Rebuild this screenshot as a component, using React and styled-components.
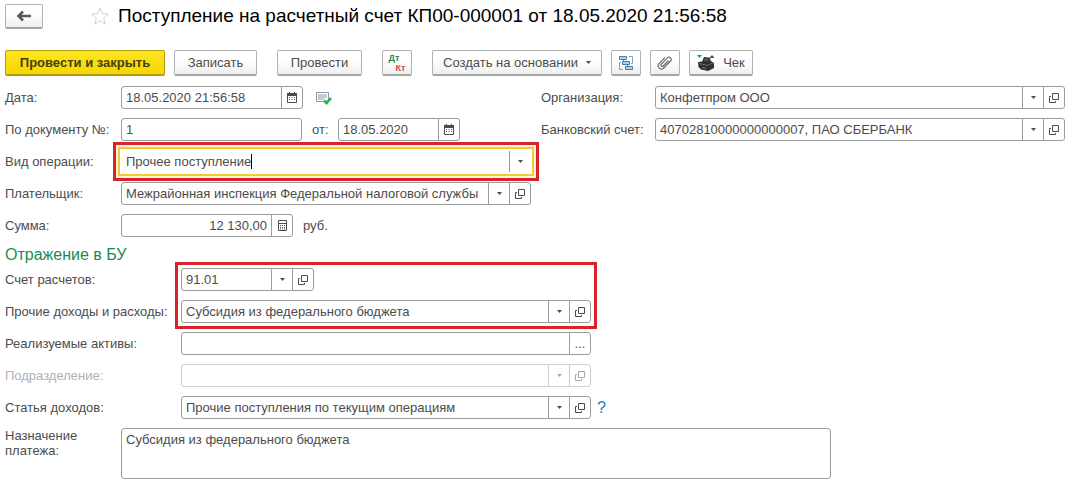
import { useId, useState } from "react";
import styled, { createGlobalStyle, css } from "styled-components";

const GlobalStyle = createGlobalStyle`
    body {
        margin: 0;
        background: #fff;
        color: #4c4c4c;
        font-family: "Liberation Sans", Arial, sans-serif;
        font-size: 13px;
    }

    * {
        box-sizing: border-box;
    }
`;

function ArrowIcon() {
    return (
        <svg width="16" height="12" viewBox="0 0 16 12" aria-hidden="true">
            <path d="M7 1.500 2.500 6 7 10.500M3 6h12" fill="none" stroke="#5a5a5a" strokeWidth="2.600" />
        </svg>
    );
}

function StarIcon() {
    return (
        <svg width="18" height="18" viewBox="0 0 18 18" aria-hidden="true">
            <path
                d="M9 1l2.300 5.700 6 .4-4.700 3.900 1.600 6L9 13.700 3.800 17l1.600-6L.7 7.100l6-.4z"
                fill="#fff"
                stroke="#d2d2d2"
            />
        </svg>
    );
}

function StructureIcon() {
    return (
        <svg width="16" height="16" viewBox="0 0 16 16" aria-hidden="true">
            <path d="M3 7.500H1.500v7H5M11 1.500h3.500v7H13" fill="none" stroke="#7fa3bd" />
            <path d="M5.500 5v2M9.500 9v3" stroke="#4681ac" />
            <path d="M1.500 1.500h7v3h-7zM4.500 6.500h7v3h-7zM7.500 11.500h7v3h-7z" fill="#a9d3f1" stroke="#4681ac" />
        </svg>
    );
}

function ClipIcon() {
    return (
        <svg width="16" height="16" viewBox="0 0 16 16" aria-hidden="true">
            <path
                d="M11.500 5.500 6.200 11a1.300 1.300 0 0 1-1.900-1.800l6-6.300a2.200 2.200 0 0 1 3.200 3.100l-6.700 7a3.200 3.200 0 0 1-4.700-4.400l5.600-5.900"
                fill="none"
                stroke="#6b6b6b"
                strokeWidth="1.200"
            />
        </svg>
    );
}

function CashRegisterIcon() {
    return (
        <svg width="18" height="18" viewBox="0 0 18 18" aria-hidden="true">
            <path d="M0 1h5L2.500 4z" fill="#1d9a63" />
            <path d="M12.500 4h5L15 1z" fill="#2b4a9c" />
            <path d="M1 8l4-.5L7 3l6 .8.500 3L17 9v5l-6 3-7-1.500L1.500 13z" fill="#303030" />
            <path d="M7.500 4.500l4.500.4-.6 2-4.600-.3z" fill="#5c5c5c" />
            <path d="M2 9.500l8 1.800 6-2.300" fill="none" stroke="#777" strokeWidth=".8" />
            <path d="M5 13.500l4 .9" stroke="#8c8c8c" strokeWidth=".8" />
        </svg>
    );
}

function CalendarIcon() {
    return (
        <svg width="10" height="11" viewBox="0 0 10 11" aria-hidden="true">
            <path d="M.5 2.500h9v8h-9z" fill="#fff" stroke="#4c4c4c" />
            <path d="M0 1h10v3H0zM2 0h1v2H2zM7 0h1v2H7z" fill="#4c4c4c" />
            <path d="M2 5.500h1M4.500 5.500h1M7 5.500h1M2 7.500h1M4.500 7.500h1M7 7.500h1" stroke="#4c4c4c" />
        </svg>
    );
}

function CalculatorIcon() {
    return (
        <svg width="9" height="11" viewBox="0 0 9 11" aria-hidden="true">
            <path d="M.5.5h8v10h-8zM1 3.500h7" fill="none" stroke="#4c4c4c" />
            <path d="M2 5.500h1M4 5.500h1M6 5.500h1M2 7.500h1M4 7.500h1M6 7.500h1M2 9h1M4 9h1M6 9h1" stroke="#4c4c4c" />
        </svg>
    );
}

function OpenIcon() {
    return (
        <svg width="10" height="10" viewBox="0 0 10 10" aria-hidden="true">
            <path d="M3.500.5h6v6h-6zM2 3.500H.5v6h6V8" fill="none" stroke="currentColor" />
        </svg>
    );
}

function CaretDownIcon() {
    return (
        <svg width="5" height="3" viewBox="0 0 5 3" aria-hidden="true">
            <path d="M0 0h5L2.500 3z" fill="currentColor" />
        </svg>
    );
}

function PostedIcon() {
    return (
        <svg width="16" height="14" viewBox="0 0 16 14" aria-hidden="true">
            <path d="M.5 1.500h12v9H.5z" fill="#fff" stroke="#8a9aa8" />
            <path d="M2 4h9M2 6h9M2 8h6" stroke="#8a9aa8" />
            <path d="M8 9.500l2.500 2.500L15 7" fill="none" stroke="#2fae43" strokeWidth="2.600" />
        </svg>
    );
}

const ACTIONS = {
    list: { title: "Выбрать из списка", icon: <CaretDownIcon /> },
    open: { title: "Открыть", icon: <OpenIcon /> },
    date: { title: "Календарь", icon: <CalendarIcon /> },
    calc: { title: "Калькулятор", icon: <CalculatorIcon /> },
    more: { title: "Выбрать", icon: "..." },
};

function Field({ id, value, width, grow, align, muted, active, actions = [] }) {
    const [text, setText] = useState(value);

    return (
        <FieldBox $width={width} $grow={grow} $muted={muted} $active={active}>
            <FieldInput
                id={id}
                value={text}
                onChange={(e) => setText(e.target.value)}
                disabled={muted}
                $align={align}
                $fit={active}
            />
            {active && <TextCursor />}
            {actions.map((action) => (
                <FieldButton key={action} type="button" aria-label={ACTIONS[action].title} disabled={muted}>
                    {ACTIONS[action].icon}
                </FieldButton>
            ))}
        </FieldBox>
    );
}

function LabeledField({ label, labelSize, children, ...field }) {
    const id = useId();

    return (
        <Row>
            <Label htmlFor={id} $size={labelSize} $muted={field.muted}>{label}</Label>
            <Field id={id} {...field} />
            {children}
        </Row>
    );
}

function App() {
    return (
        <Page>
            <GlobalStyle />
            <Header>
                <BackButton type="button" aria-label="Назад"><ArrowIcon /></BackButton>
                <StarButton type="button" aria-label="Избранное"><StarIcon /></StarButton>
                <Title>Поступление на расчетный счет КП00-000001 от 18.05.2020 21:56:58</Title>
            </Header>

            <Toolbar>
                <ToolGroup>
                    <Button type="button" $primary $width={160}>Провести и закрыть</Button>
                    <Button type="button" $width={83}>Записать</Button>
                </ToolGroup>
                <Button type="button" $width={85}>Провести</Button>
                <Button type="button" $width={30}>
                    <Entry>
                        <Debit>Дт</Debit>
                        <Credit>Кт</Credit>
                    </Entry>
                </Button>
                <ToolGroup>
                    <Button type="button" $width={170}>Создать на основании <CaretDownIcon /></Button>
                    <Button type="button" $width={30} aria-label="Структура подчиненности"><StructureIcon /></Button>
                    <Button type="button" $width={30} aria-label="Файлы"><ClipIcon /></Button>
                    <Button type="button" $width={64}><CashRegisterIcon /> Чек</Button>
                </ToolGroup>
            </Toolbar>

            <Form>
                <Columns>
                    <Stack>
                        <LabeledField label="Дата:" value="18.05.2020 21:56:58" width={182} actions={["date"]}>
                            <Posted><PostedIcon /></Posted>
                        </LabeledField>
                        <LabeledField label="По документу №:" value="1" width={181}>
                            <InlineLabel htmlFor="doc-date">от:</InlineLabel>
                            <Field id="doc-date" value="18.05.2020" width={122} actions={["date"]} />
                        </LabeledField>
                        <Row>
                            <Label htmlFor="operation">Вид операции:</Label>
                            <Marked $space={8}>
                                <Field id="operation" value="Прочее поступление" width={410} active actions={["list"]} />
                            </Marked>
                        </Row>
                        <LabeledField
                            label="Плательщик:"
                            value="Межрайонная инспекция Федеральной налоговой службы"
                            width={410}
                            actions={["list", "open"]}
                        />
                        <LabeledField label="Сумма:" value="12 130,00" width={172} align="right" actions={["calc"]}>
                            <Unit>руб.</Unit>
                        </LabeledField>
                    </Stack>
                    <Stack>
                        <LabeledField label="Организация:" labelSize={114} value="Конфетпром ООО" grow actions={["list", "open"]} />
                        <LabeledField
                            label="Банковский счет:"
                            labelSize={114}
                            value="40702810000000000007, ПАО СБЕРБАНК"
                            grow
                            actions={["list", "open"]}
                        />
                    </Stack>
                </Columns>

                <SectionTitle>Отражение в БУ</SectionTitle>

                <Stack>
                    <Group>
                        <Stack>
                            <Label htmlFor="account" $size={176}>Счет расчетов:</Label>
                            <Label htmlFor="income" $size={176}>Прочие доходы и расходы:</Label>
                        </Stack>
                        <Marked $space={6}>
                            <Stack>
                                <Field id="account" value="91.01" width={133} actions={["list", "open"]} />
                                <Field id="income" value="Субсидия из федерального бюджета" width={410} actions={["list", "open"]} />
                            </Stack>
                        </Marked>
                    </Group>
                    <LabeledField label="Реализуемые активы:" labelSize={176} value="" width={410} actions={["more"]} />
                    <LabeledField label="Подразделение:" labelSize={176} value="" width={410} muted actions={["list", "open"]} />
                    <LabeledField
                        label="Статья доходов:"
                        labelSize={176}
                        value="Прочие поступления по текущим операциям"
                        width={410}
                        actions={["list", "open"]}
                    >
                        <Help href="#help">?</Help>
                    </LabeledField>
                    <Group>
                        <PurposeLabel htmlFor="purpose">Назначение платежа:</PurposeLabel>
                        <Purpose id="purpose" defaultValue="Субсидия из федерального бюджета" />
                    </Group>
                </Stack>
            </Form>
        </Page>
    );
}

const Page = styled.main`
    padding: 4px 7px 8px 5px;
`;

const Header = styled.header`
    display: flex;
    align-items: center;
    height: 24px;
`;

const Title = styled.h1`
    margin: 0 0 0 9px;
    color: #000;
    font-size: 19px;
    font-weight: normal;
    line-height: 24px;
    white-space: nowrap;
`;

const buttonFace = css`
    display: flex;
    align-items: center;
    justify-content: center;
    padding: 0;
    border: 1px solid #b3b3b3;
    border-bottom: 2px solid #a5a5a5;
    border-radius: 2px;
    background: linear-gradient(#fff 40%, #efefef);
    color: #4c4c4c;
    font-family: inherit;
`;

const BackButton = styled.button`
    ${buttonFace}
    width: 38px;
    height: 25px;
`;

const StarButton = styled.button`
    display: flex;
    margin-left: 48px;
    padding: 0;
    border: 0;
    background: none;
`;

const Toolbar = styled.div`
    display: flex;
    gap: 20px;
    margin-top: 22px;
`;

const ToolGroup = styled.div`
    display: flex;
    gap: 9px;
`;

const Button = styled.button`
    ${buttonFace}
    gap: 8px;
    min-width: ${(props) => props.$width}px;
    height: 26px;
    font-size: 13px;
    white-space: nowrap;

    ${(props) =>
        props.$primary &&
        css`
            border-color: #b39c10;
            background: linear-gradient(#ffe51f, #f5d600);
            color: #44400f;
            font-weight: bold;
        `}
`;

const Entry = styled.span`
    display: flex;
    flex-direction: column;
    width: 17px;
    font-size: 9px;
    font-weight: bold;
    line-height: 10px;
`;

const Debit = styled.span`
    align-self: flex-start;
    color: #1b8c56;
`;

const Credit = styled.span`
    align-self: flex-end;
    color: #cd4a4a;
`;

const Form = styled.form`
    margin-top: 10px;
`;

const Columns = styled.div`
    display: grid;
    grid-template-columns: 526px minmax(280px, 1fr);
    column-gap: 10px;
`;

const Stack = styled.div`
    display: flex;
    flex-direction: column;
    gap: 9px;
`;

const Row = styled.div`
    display: flex;
    align-items: center;
`;

const Group = styled.div`
    display: flex;
`;

const Label = styled.label`
    flex: none;
    width: ${(props) => props.$size || 116}px;
    color: ${(props) => (props.$muted ? "#b0b0b0" : "#4c4c4c")};
    line-height: 23px;
    white-space: nowrap;
`;

const InlineLabel = styled.label`
    width: 36px;
    padding-left: 10px;
`;

const Unit = styled.span`
    margin-left: 10px;
`;

const Posted = styled.span`
    display: flex;
    margin-left: 13px;
`;

const FieldBox = styled.div`
    display: flex;
    flex: ${(props) => (props.$grow ? "1" : "none")};
    width: ${(props) => (props.$width ? `${props.$width}px` : "auto")};
    height: 23px;
    border: 1px solid ${(props) => (props.$muted ? "#cfcfcf" : "#9c9c9c")};
    border-radius: 3px;
    background: #fff;
    color: ${(props) => (props.$muted ? "#a8a8a8" : "#4c4c4c")};

    ${(props) =>
        props.$active &&
        css`
            border-color: transparent;
            border-radius: 0;
            outline: 2px solid #efcb3a;
            outline-offset: 1px;
            box-shadow: 0 0 0 1px #fff, 0 0 0 5px #fff6d2;
        `}
`;

const FieldInput = styled.input`
    flex: ${(props) => (props.$fit ? "none" : "1")};
    field-sizing: ${(props) => (props.$fit ? "content" : "fixed")};
    min-width: 0;
    padding: 0 ${(props) => (props.$fit ? 0 : 4)}px 0 4px;
    border: 0;
    outline: 0;
    background: none;
    color: inherit;
    font: inherit;
    text-align: ${(props) => props.$align || "left"};
`;

const TextCursor = styled.span`
    align-self: center;
    width: 1px;
    height: 15px;
    margin-right: auto;
    background: #000;
`;

const FieldButton = styled.button`
    display: flex;
    flex: none;
    align-items: center;
    justify-content: center;
    width: 21px;
    padding: 0;
    border: 0;
    border-left: 1px solid ${(props) => (props.disabled ? "#cfcfcf" : "#9c9c9c")};
    background: none;
    color: inherit;
    font: inherit;
`;

const Marked = styled.div`
    position: relative;

    &::after {
        content: "";
        position: absolute;
        inset: -${(props) => props.$space}px;
        border: 3px solid #d8232d;
        pointer-events: none;
    }
`;

const SectionTitle = styled.h2`
    margin: 8px 0 3px;
    color: #1b8c50;
    font-size: 16px;
    font-weight: normal;
    line-height: 20px;
`;

const Help = styled.a`
    margin-left: 6px;
    color: #1a78c2;
    font-size: 16px;
    text-decoration: none;
`;

const PurposeLabel = styled.label`
    flex: none;
    width: 116px;
    padding-right: 20px;
    line-height: 15px;
`;

const Purpose = styled.textarea`
    flex: 0 1 710px;
    height: 51px;
    padding: 3px 4px;
    border: 1px solid #9c9c9c;
    border-radius: 3px;
    color: #4c4c4c;
    font: inherit;
    resize: none;
`;

export default App;
